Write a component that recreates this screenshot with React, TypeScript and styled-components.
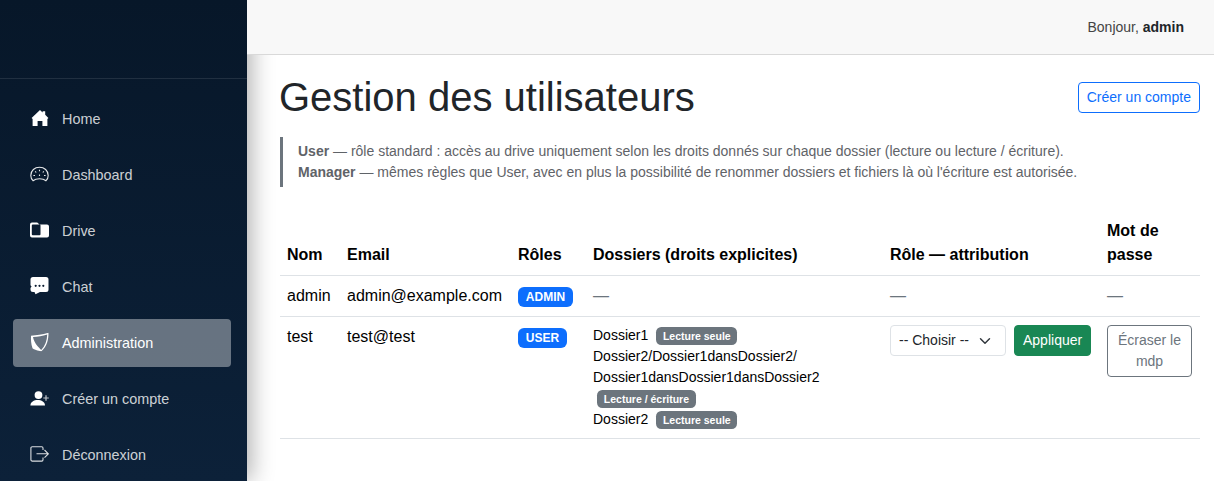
import React from "react";
import styled, { createGlobalStyle } from "styled-components";

const GlobalStyle = createGlobalStyle`
  html, body {
    margin: 0;
    padding: 0;
    height: 100%;
    background: #ffffff;
    font-family: "Liberation Sans", Arial, sans-serif;
    font-size: 16px;
    line-height: 1.5;
    color: #212529;
  }
  * {
    box-sizing: border-box;
  }
`;

const HomeIcon = () => (
  <NavIcon viewBox="0 0 19 19">
    <path
      fill="#ffffff"
      d="M10 1.5 L12.6 3.9 V2.8 H15.2 V6.3 L18.4 9.4 L17.4 10.5 V17.5 H12.4 V12.6 H7.6 V17.5 H2.6 V10.5 L1.6 9.4 Z"
    />
  </NavIcon>
);

const DashboardIcon = () => (
  <NavIcon viewBox="0 0 19 19">
    <g fill="none" stroke="#ffffff" strokeWidth="1.1" opacity="0.9">
      <path d="M3 16.2 C1.5 14.8 0.8 13 0.8 11 C0.8 6 4.7 2.8 9.5 2.8 C14.3 2.8 18.2 6 18.2 11 C18.2 13 17.5 14.8 16 16.2 C14.5 15 12 14.3 9.5 14.3 C7 14.3 4.5 15 3 16.2 Z" />
      <path d="M9.5 5.2 V6.8 M5.2 6.8 L6.2 8 M13.8 6.8 L12.8 8 M3.4 11 H5 M14 11 H15.6 M9.5 10 V11.5" />
    </g>
  </NavIcon>
);

const FolderIcon = () => (
  <NavIcon viewBox="0 0 19 19">
    <path
      fill="#ffffff"
      fillRule="evenodd"
      d="M2 2 H7.2 L9.6 4 H17 A2 2 0 0 1 19 6 V15 A2 2 0 0 1 17 17 H2 A2 2 0 0 1 0 15 V4 A2 2 0 0 1 2 2 Z M2.8 4 A1 1 0 0 0 1.8 5 V13.8 A1 1 0 0 0 2.8 14.8 H9.5 A1 1 0 0 0 10.5 13.8 V5 A1 1 0 0 0 9.5 4 Z"
    />
  </NavIcon>
);

const ChatIcon = () => (
  <NavIcon viewBox="0 0 19 19">
    <path
      fill="#ffffff"
      d="M3 0.5 H16 A2.5 2.5 0 0 1 18.5 3 V13 A2.5 2.5 0 0 1 16 15.5 H10 L5.5 17.8 L4.5 15.5 H3 A2.5 2.5 0 0 1 0.5 13 V11.4 L1.6 10 L0.5 8.8 V3 A2.5 2.5 0 0 1 3 0.5 Z"
    />
    <g fill="#0a1b30">
      <circle cx="5.7" cy="9.3" r="1.1" />
      <circle cx="9.5" cy="9.3" r="1.1" />
      <circle cx="13.3" cy="9.3" r="1.1" />
    </g>
  </NavIcon>
);

const ShieldIcon = () => (
  <NavIcon viewBox="0 0 19 19">
    <path
      fill="#ffffff"
      fillRule="evenodd"
      d="M1 3.2 C6.5 3 12 2 18.5 0.3 C18.6 7 17 14 11.5 18.8 C10 18.6 5 18 2.5 15.8 C1 11 0.8 7 1 3.2 Z M3 4.6 C8 4.3 12.5 3.4 17.2 2 C17 8 15.2 13.5 11.2 17.6 C9 15 4 11 3 4.6 Z"
    />
  </NavIcon>
);

const UserPlusIcon = () => (
  <NavIcon viewBox="0 0 19 19">
    <circle cx="8.5" cy="6.6" r="3.9" fill="#ffffff" />
    <path
      fill="#ffffff"
      d="M0.4 17 C0.4 13.5 4 11.6 7.7 11.6 C11.4 11.6 15 13.5 15 17 Z"
    />
    <path
      d="M16 6.8 V12.2 M13.3 9.5 H18.8"
      stroke="#ffffff"
      strokeWidth="1.2"
      opacity="0.75"
      fill="none"
    />
  </NavIcon>
);

const LogoutIcon = () => (
  <NavIcon viewBox="0 0 19 19">
    <g fill="none" stroke="#ffffff" strokeWidth="1.1" opacity="0.85">
      <path d="M13 5.5 V3.5 A1.3 1.3 0 0 0 11.7 2.2 H2.2 A1.3 1.3 0 0 0 0.9 3.5 V15.3 A1.3 1.3 0 0 0 2.2 16.6 H11.7 A1.3 1.3 0 0 0 13 15.3 V13" />
      <path d="M6.5 9.3 H18 M14.5 5.5 L18.3 9.3 L14.5 13.1" />
    </g>
  </NavIcon>
);

const navItems = [
  { label: "Home", icon: <HomeIcon /> },
  { label: "Dashboard", icon: <DashboardIcon /> },
  { label: "Drive", icon: <FolderIcon /> },
  { label: "Chat", icon: <ChatIcon /> },
  { label: "Administration", icon: <ShieldIcon />, active: true },
  { label: "Créer un compte", icon: <UserPlusIcon /> },
  { label: "Déconnexion", icon: <LogoutIcon /> },
];

const App: React.FC = () => {
  return (
    <Layout>
      <GlobalStyle />
      <Sidebar>
        <SidebarBrand />
        <Nav>
          {navItems.map((item) => (
            <NavLink key={item.label} href="#" $active={item.active}>
              {item.icon}
              <NavLabel>{item.label}</NavLabel>
            </NavLink>
          ))}
        </Nav>
      </Sidebar>

      <Main>
        <TopBar>
          <Greeting>
            Bonjour, <strong>admin</strong>
          </Greeting>
        </TopBar>

        <Content>
          <TitleRow>
            <Title>Gestion des utilisateurs</Title>
            <OutlineButton>Créer un compte</OutlineButton>
          </TitleRow>

          <Note>
            <div>
              <strong>User</strong> — rôle standard : accès au drive uniquement
              selon les droits donnés sur chaque dossier (lecture ou lecture /
              écriture).
            </div>
            <div>
              <strong>Manager</strong> — mêmes règles que User, avec en plus la
              possibilité de renommer dossiers et fichiers là où l'écriture est
              autorisée.
            </div>
          </Note>

          <Table>
            <colgroup>
              <col width={60} />
              <col width={171} />
              <col width={75} />
              <col width={297} />
              <col width={217} />
              <col width={100} />
            </colgroup>
            <thead>
              <tr>
                <th>Nom</th>
                <th>Email</th>
                <th>Rôles</th>
                <th>Dossiers (droits explicites)</th>
                <th>Rôle — attribution</th>
                <th>Mot de passe</th>
              </tr>
            </thead>
            <tbody>
              <tr>
                <td>admin</td>
                <td>admin@example.com</td>
                <td>
                  <RoleBadge>ADMIN</RoleBadge>
                </td>
                <td>
                  <Muted>—</Muted>
                </td>
                <td>
                  <Muted>—</Muted>
                </td>
                <td>
                  <Muted>—</Muted>
                </td>
              </tr>
              <tr>
                <td>test</td>
                <td>test@test</td>
                <td>
                  <RoleBadge>USER</RoleBadge>
                </td>
                <td>
                  <FolderRight>
                    Dossier1 <RightBadge>Lecture seule</RightBadge>
                  </FolderRight>
                  <FolderRight>
                    Dossier2/
                    <wbr />
                    Dossier1dansDossier2/
                    <wbr />
                    Dossier1dansDossier1dansDossier2{" "}
                    <RightBadge>Lecture / écriture</RightBadge>
                  </FolderRight>
                  <FolderRight>
                    Dossier2 <RightBadge>Lecture seule</RightBadge>
                  </FolderRight>
                </td>
                <td>
                  <RoleForm>
                    <RoleSelect defaultValue="">
                      <option value="">-- Choisir --</option>
                      <option value="user">User</option>
                      <option value="manager">Manager</option>
                    </RoleSelect>
                    <ApplyButton>Appliquer</ApplyButton>
                  </RoleForm>
                </td>
                <td>
                  <ResetButton>Écraser le mdp</ResetButton>
                </td>
              </tr>
            </tbody>
          </Table>
        </Content>
      </Main>
    </Layout>
  );
};

const Layout = styled.div`
  display: flex;
  height: 100vh;
  overflow: hidden;
`;

const Sidebar = styled.aside`
  flex: 0 0 247px;
  display: flex;
  flex-direction: column;
  background: linear-gradient(180deg, #071729 0%, #0c2139 100%);
  box-shadow: 4px 0 22px rgba(0, 0, 0, 0.32);
`;

const SidebarBrand = styled.div`
  height: 79px;
  border-bottom: 1px solid rgba(255, 255, 255, 0.1);
`;

const Nav = styled.nav`
  display: flex;
  flex-direction: column;
  gap: 8px;
  padding: 16px 16px 0 13px;
`;

const NavLink = styled.a<{ $active?: boolean }>`
  display: flex;
  align-items: center;
  gap: 13px;
  height: 48px;
  padding-left: 17px;
  border-radius: 4px;
  font-size: 14.4px;
  text-decoration: none;
  color: ${(p) => (p.$active ? "#ffffff" : "rgba(255, 255, 255, 0.8)")};
  background: ${(p) => (p.$active ? "rgba(255, 255, 255, 0.38)" : "transparent")};
`;

const NavLabel = styled.span`
  margin-top: 2px;
`;

const NavIcon = styled.svg`
  flex: none;
  width: 19px;
  height: 19px;
  transform: translateY(-1.5px);
`;

const Main = styled.main`
  flex: 1;
  min-width: 0;
  display: flex;
  flex-direction: column;
`;

const TopBar = styled.header`
  position: relative;
  z-index: 1;
  display: flex;
  align-items: center;
  justify-content: flex-end;
  height: 55px;
  padding-right: 30px;
  background: #f8f8f8;
  border-bottom: 1px solid #d9d9d9;
`;

const Greeting = styled.div`
  font-size: 14px;
  color: #444444;

  strong {
    color: #212529;
  }
`;

const Content = styled.div`
  padding: 18px 14px 0 33px;
`;

const TitleRow = styled.div`
  display: flex;
  align-items: center;
  justify-content: space-between;
  margin-bottom: 16px;
`;

const Title = styled.h1`
  margin: 0 0 0 -1px;
  font-size: 40px;
  font-weight: 500;
  line-height: 48px;
  color: #212529;
`;

const OutlineButton = styled.button`
  height: 31px;
  padding: 4px 8px;
  background: transparent;
  border: 1px solid #0d6efd;
  border-radius: 4px;
  font-family: inherit;
  font-size: 14px;
  line-height: 21px;
  color: #0d6efd;
`;

const Note = styled.blockquote`
  margin: 0 0 24px;
  padding: 4px 0 4px 15px;
  border-left: 3px solid #6c757d;
  font-size: 14px;
  line-height: 21px;
  color: #5f6368;
`;

const Table = styled.table`
  width: 920px;
  table-layout: fixed;
  border-collapse: collapse;
  color: #000000;

  th,
  td {
    padding: 8px 7px;
    border-bottom: 1px solid #dee2e6;
    text-align: left;
    vertical-align: top;
  }

  th {
    vertical-align: bottom;
    font-weight: 700;
  }
`;

const Muted = styled.span`
  color: #6c757d;
`;

const RoleBadge = styled.span`
  display: inline-block;
  padding: 4.2px 7.8px;
  background: #0d6efd;
  border-radius: 6px;
  font-size: 12px;
  font-weight: 700;
  line-height: 1;
  color: #ffffff;
  vertical-align: baseline;
`;

const FolderRight = styled.div`
  font-size: 14px;
  line-height: 21px;
`;

const RightBadge = styled.span`
  display: inline-block;
  margin-left: 4px;
  padding: 3.7px 6.8px;
  background: #6c757d;
  border-radius: 5.25px;
  font-size: 10.5px;
  font-weight: 700;
  line-height: 1;
  color: #ffffff;
`;

const RoleForm = styled.div`
  display: flex;
  align-items: flex-start;
  gap: 8px;
`;

const RoleSelect = styled.select`
  width: 116px;
  height: 31px;
  padding: 4px 36px 4px 8px;
  appearance: none;
  background: #ffffff
    url("data:image/svg+xml,%3csvg xmlns='http://www.w3.org/2000/svg' viewBox='0 0 16 16'%3e%3cpath fill='none' stroke='%23343a40' stroke-linecap='round' stroke-linejoin='round' stroke-width='2' d='m2 5 6 6 6-6'/%3e%3c/svg%3e")
    no-repeat right 12px center / 16px 12px;
  border: 1px solid #dee2e6;
  border-radius: 4px;
  font-family: inherit;
  font-size: 14px;
  line-height: 21px;
  color: #212529;
`;

const ApplyButton = styled.button`
  height: 31px;
  padding: 4px 8px;
  background: #198754;
  border: 1px solid #198754;
  border-radius: 4px;
  font-family: inherit;
  font-size: 14px;
  line-height: 21px;
  color: #ffffff;
`;

const ResetButton = styled.button`
  width: 85px;
  padding: 4px 8px;
  background: transparent;
  border: 1px solid #6c757d;
  border-radius: 4px;
  font-family: inherit;
  font-size: 14px;
  line-height: 21px;
  color: #6c757d;
`;

export default App;
